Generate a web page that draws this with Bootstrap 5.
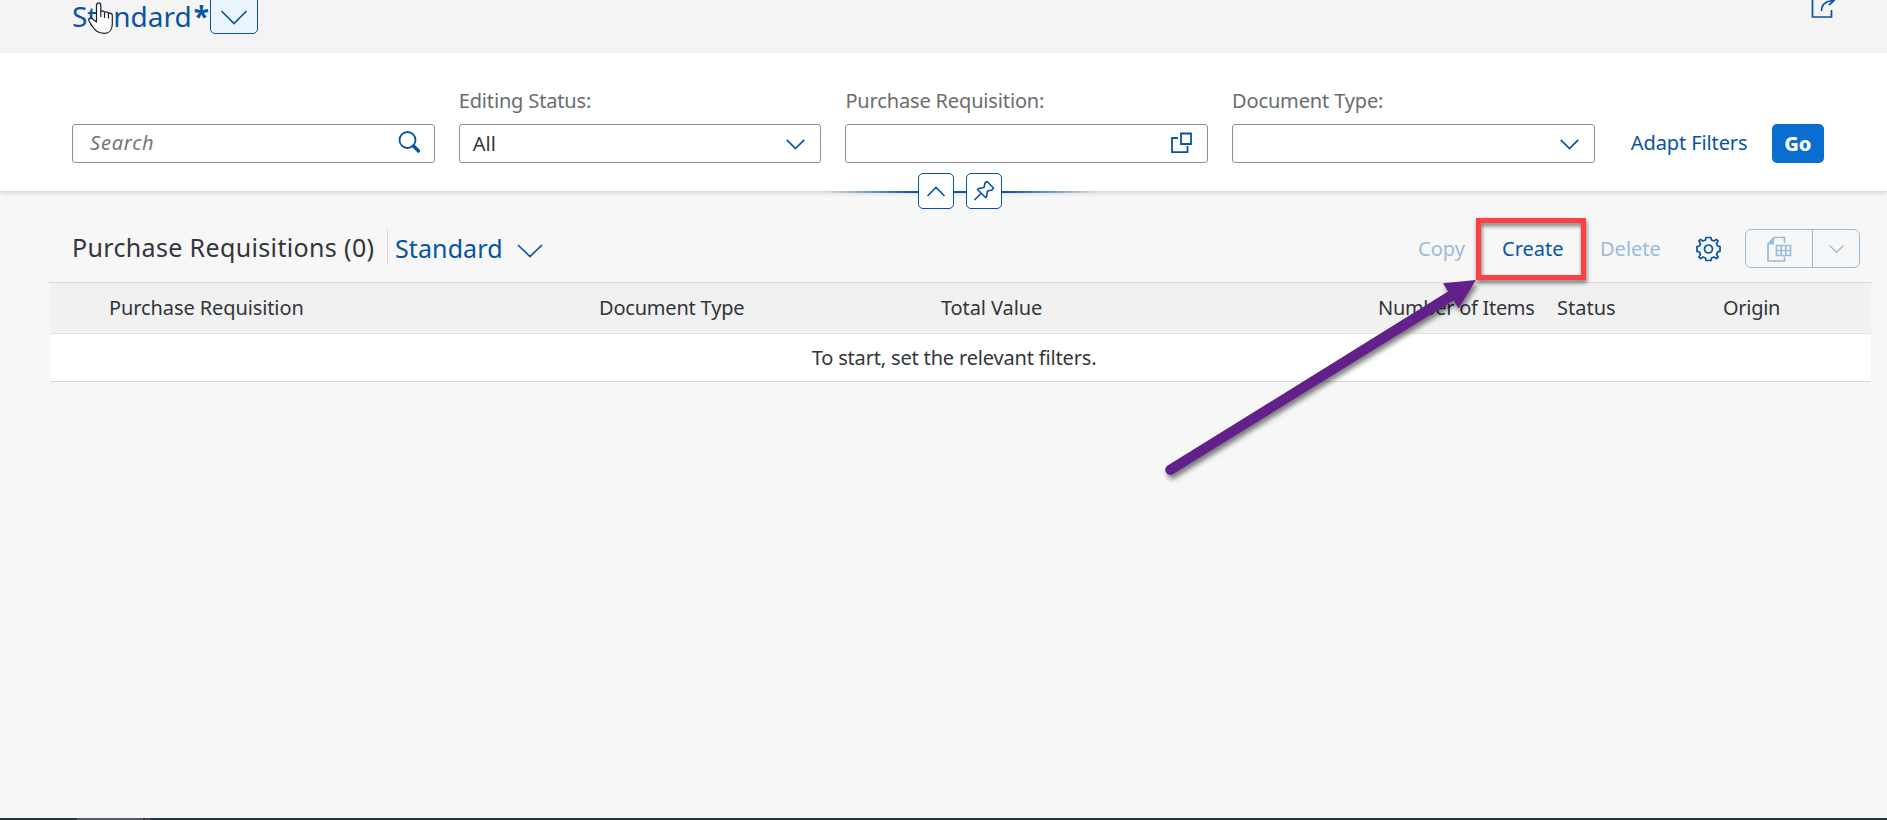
<!DOCTYPE html>
<html lang="en">
<head>
<meta charset="utf-8">
<title>Purchase Requisitions</title>
<link href="https://cdn.jsdelivr.net/npm/bootstrap@5.3.0/dist/css/bootstrap.min.css" rel="stylesheet">
<style>
  :root { --brand: #0854a0; --ink: #32363a; --hint: #6a6d70; --edge: #89919a; --pale: #9bbbd9; }
  body { font-family: "Noto Sans", sans-serif; font-size: 20px; line-height: 28px; color: var(--ink); background: #f7f7f7; height: 820px; }
  svg { display: block; fill: none; stroke: currentColor; flex: none; }
  .brand { color: var(--brand); }
  .pale { color: var(--pale); }
  .page-head { height: 53px; background: #f4f4f4; padding: 0 52px 0 72px; }
  .variant-title { font-size: 28px; line-height: 32px; height: 34px; width: 138px; white-space: nowrap; }
  .variant-title b { margin-left: 2px; }
  .variant-btn { width: 48px; height: 40px; margin-top: -6px; border: 1px solid var(--brand); border-radius: 5px; background: #ebf5fe; }
  .filter-bar { height: 139px; background: #fff; padding: 31px 63px 28px 72px; gap: 24px; border-bottom: 1px solid #d9d9d9; box-shadow: 0 2px 4px rgba(0,0,0,.1); }
  .field { width: 362.7px; flex: none; }
  .field-label { color: var(--hint); height: 40px; padding-top: 3px; letter-spacing: -.15px; }
  .field-box { height: 39px; border: 1px solid var(--edge); border-radius: 3px; background: #fff; padding: 0 15px 0 13px; }
  .search-box { padding: 0 14px 2px 17px; font-style: italic; color: #74777a; letter-spacing: .8px; }
  .adapt { margin-left: 12px; height: 39px; line-height: 38px; width: 117px; white-space: nowrap; letter-spacing: -.1px; }
  .go-btn { width: 53px; height: 39px; border-radius: 5px; background: #0a6ed1; color: #fff; font-weight: 800; font-size: 20px; padding: 0; line-height: 37px; border: 0; }
  .toggle-strip { left: 825px; top: 173px; width: 272px; height: 36px; gap: 12px; padding-left: 93px; }
  .toggle-strip::before { content: ""; position: absolute; left: 0; right: 0; top: 18px; height: 2px; background: linear-gradient(90deg, transparent, var(--brand) 33%, var(--brand) 66%, transparent); }
  .toggle-btn { position: relative; width: 36px; height: 36px; border: 1px solid var(--brand); border-radius: 5px; background: #fff; }
  .tools { height: 90px; padding: 37px 27px 14px 72px; }
  .list-title { font-size: 25px; letter-spacing: .35px; line-height: 36px; width: 315px; height: 36px; white-space: nowrap; }
  .list-variant { font-size: 25px; line-height: 38px; border-left: 1px solid #d9d9d9; padding-left: 7px; height: 36px; width: 130px; letter-spacing: .1px; }
  .tool-text { white-space: nowrap; line-height: 40px; }
  .tool-copy { width: 84px; } .tool-create { width: 98px; } .tool-delete { width: 95px; }
  .split { width: 115px; height: 39px; border: 1px solid var(--pale); border-radius: 6px; }
  .split-main { width: 67px; border-right: 1px solid var(--pale); }
  .grid-wrap { margin: 0 15px 0 48px; border-top: 1px solid #d9d9d9; padding: 0 1px 0 2px; }
  .grid-head { height: 51px; line-height: 49px; background: #f1f1f1; border-bottom: 1px solid #e4e4e4; white-space: nowrap; padding-left: 59px; letter-spacing: -.3px; }
  .c-req { width: 490px; letter-spacing: -.1px; } .c-type { width: 342px; letter-spacing: -.2px; } .c-val { width: 437px; letter-spacing: -.1px; } .c-num { width: 179px; } .c-stat { width: 166px; letter-spacing: 0; }
  .grid-row { height: 48px; line-height: 48px; background: #fff; border-bottom: 1px solid #d9d9d9; padding-right: 13px; letter-spacing: -.17px; }
  .task-edge { height: 2px; background: #223a47; padding-left: 77px; }
  .task-edge span { width: 66px; background: #4b5e66; }
  .task-edge i { width: 5px; margin-left: 2px; background: #414c52; }
  .callout { left: 1476px; top: 218px; width: 110px; height: 62px; border: 5px solid #fb4143; filter: drop-shadow(1px 3px 2px rgba(0,0,0,.5)); }
  .overlay { left: 0; top: 0; pointer-events: none; }
</style>
<script src="https://cdn.jsdelivr.net/npm/bootstrap@5.3.0/dist/js/bootstrap.bundle.min.js"></script>
</head>
<body class="d-flex flex-column overflow-hidden position-relative">
<header class="page-head d-flex align-items-start">
  <div class="variant-title brand">Standard<b>*</b></div>
  <button class="variant-btn brand p-0 d-flex justify-content-center" aria-label="Views"><svg width="46" height="38" stroke-width="1.7"><path d="M10.5 16 23 28.5 35.500 16"/></svg></button>
  <svg class="brand ms-auto me-0" width="26" height="20" stroke-width="1.7" aria-label="Share"><path d="M3.500-3V17H22.500V10M12.500 11C12.500 5 16 1 25 .500M20 5 25 .500 20-4"/></svg>
</header>
<section class="filter-bar d-flex align-items-end">
  <div class="field field-box search-box d-flex align-items-center justify-content-between"><span>Search</span>
    <svg class="brand" width="22" height="24" stroke-width="1.8"><circle cx="9.500" cy="9" r="8"/><path stroke-width="3.400" stroke-linecap="round" d="m15.500 15 5 5"/></svg></div>
  <div class="field"><div class="field-label">Editing Status:</div>
    <div class="field-box d-flex align-items-center justify-content-between"><span>All</span><svg class="brand" width="19" height="12" stroke-width="1.700"><path d="M.800 1.800 9.500 10.500 18.200 1.800"/></svg></div></div>
  <div class="field"><div class="field-label">Purchase Requisition:</div>
    <div class="field-box d-flex align-items-center justify-content-end pb-1"><svg class="brand" width="21" height="22" stroke-width="1.800"><path d="M10 2.500H20V13H10ZM7 7H1V21.100H16.500V15"/></svg></div></div>
  <div class="field"><div class="field-label">Document Type:</div>
    <div class="field-box d-flex align-items-center justify-content-end"><svg class="brand" width="19" height="12" stroke-width="1.700"><path d="M.800 1.800 9.500 10.500 18.200 1.800"/></svg></div></div>
  <div class="adapt brand">Adapt Filters</div>
  <button class="btn go-btn ms-auto">Go</button>
</section>
<section class="tools d-flex align-items-start">
  <h1 class="list-title mb-0 fw-normal">Purchase Requisitions (0)</h1>
  <div class="list-variant brand">Standard</div>
  <svg class="brand" width="26" height="34" stroke-width="1.700"><path d="M1 16 13 27.500 25 16"/></svg>
  <div class="d-flex ms-auto align-items-start">
    <span class="tool-text tool-copy pale">Copy</span>
    <span class="tool-text tool-create brand">Create</span>
    <span class="tool-text tool-delete pale">Delete</span>
    <svg class="brand me-4" width="26" height="38" stroke-width="1.700" stroke-linejoin="round"><g transform="translate(13.500 20)"><circle r="4"/><path d="M-2.400-11.500H2.400L3-9 5.600-8 8-9.600 9.600-8 8-5.600 9-3 11.500-2.400V2.400L9 3 8 5.600 9.600 8 8 9.600 5.600 8 3 9 2.400 11.500H-2.400L-3 9-5.600 8-8 9.600-9.600 8-8 5.600-9 3-11.500 2.400V-2.400L-9-3-8-5.600-9.600-8-8-9.600-5.600-8-3-9Z"/></g></svg>
    <div class="split pale d-flex ms-0">
      <div class="split-main d-flex align-items-center justify-content-center"><svg width="26" height="28" stroke-width="1.700"><path d="M18.500 8V2.500H8L2 9V26H18.500V21.500"/><path fill="currentColor" stroke="none" d="M1 9.500 8 2V9.500Z"/><path d="M10.500 10.500H24.500V20.500H10.500ZM10.500 15.500H24.500M15.200 10V20.500M19.900 10V20.500"/></svg></div>
      <div class="flex-fill d-flex align-items-center justify-content-center"><svg width="15" height="8" stroke-width="1.300"><path d="M.500.500 7.500 7.300 14.500.500"/></svg></div>
    </div>
  </div>
</section>
<main class="grid-wrap">
  <div class="grid-head d-flex">
    <div class="c-req">Purchase Requisition</div><div class="c-type">Document Type</div><div class="c-val">Total Value</div><div class="c-num">Number of Items</div><div class="c-stat">Status</div><div>Origin</div>
  </div>
  <div class="grid-row text-center">To start, set the relevant filters.</div>
</main>
<footer class="task-edge mt-auto d-flex"><span></span><i></i></footer>

<div class="toggle-strip position-absolute d-flex">
  <button class="toggle-btn brand p-0"><svg width="34" height="34" stroke-width="1.600"><path d="M8.500 22 17 13.500 25.500 22"/></svg></button>
  <button class="toggle-btn brand p-0"><svg width="34" height="34" stroke-width="1.600" stroke-linejoin="round"><path d="M20 7.500 26.500 14 25 16 20.500 17 19.500 23 18.500 23.500 10.500 15.500 11.500 14.500 17 13.500 18 9ZM14 19.500 7.500 26"/></svg></button>
</div>
<svg class="overlay position-absolute" width="1887" height="820">
  <!-- arrow towards the Create action -->
  <g style="filter:drop-shadow(2px 4px 2.500px rgba(0,0,0,.5))" fill="#62218a" stroke="none">
    <path d="M1476 280 1443 283.300 1448 291.600 1167.300 465.800A5 5 0 0 0 1172.700 474.200L1453.500 300.500 1458.500 308.300Z"/>
  </g>
  <!-- hand pointer -->
  <path fill="#fff" stroke="#1c1c2c" stroke-width="1.200" stroke-linejoin="round" d="M96.500 20V5.500C96.500 2 100.800 2 100.800 5.500V12.500C101 10 104.500 10.500 104.500 13 105 11 108.300 11.500 108.500 14 109.500 12.300 112.300 13 112.300 15.500V24C112.300 30 109 33.300 104.500 33.300 98 33.300 95.500 31 92.500 26.500L89 21C88 18.500 91 17 93 19.200L96.500 22ZM100.800 12V17M104.500 13V18M108.500 14V18.500"/>
</svg>
<div class="callout position-absolute"></div>
</body>
</html>
